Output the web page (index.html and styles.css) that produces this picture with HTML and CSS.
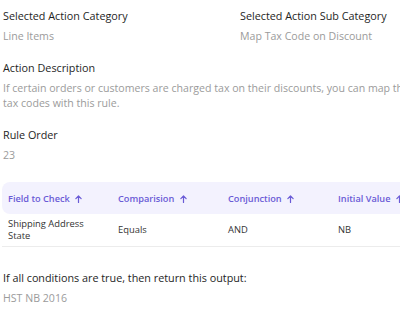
FILE: index.html
```html
<!DOCTYPE html>
<html>

<head>
    <meta charset="UTF-8">
    <title>Rule Details</title>
    <!-- Styles  -->
    <link rel="stylesheet" href="styles.css">
</head>

<body>
    <div class="page">
        <!-- Category info -->
        <div class="row">
            <div class="field">
                <div class="label">Selected Action Category</div>
                <div class="value">Line Items</div>
            </div>
            <div class="field">
                <div class="label">Selected Action Sub Category</div>
                <div class="value">Map Tax Code on Discount</div>
            </div>
        </div>

        <div class="field">
            <div class="label">Action Description</div>
            <div class="value">If certain orders or customers are charged tax on their discounts, you can map the
                tax codes with this rule.</div>
        </div>

        <div class="field">
            <div class="label">Rule Order</div>
            <div class="value">23</div>
        </div>

        <!-- Conditions -->
        <table class="conditions">
            <thead>
                <tr>
                    <th>Field to Check <svg class="arrow" viewBox="0 0 8 9"><path d="M4 8.5V1M1 4l3-3 3 3" /></svg></th>
                    <th>Comparision <svg class="arrow" viewBox="0 0 8 9"><path d="M4 8.5V1M1 4l3-3 3 3" /></svg></th>
                    <th>Conjunction <svg class="arrow" viewBox="0 0 8 9"><path d="M4 8.5V1M1 4l3-3 3 3" /></svg></th>
                    <th>Initial Value <svg class="arrow" viewBox="0 0 8 9"><path d="M4 8.5V1M1 4l3-3 3 3" /></svg></th>
                </tr>
            </thead>
            <tbody>
                <tr>
                    <td>Shipping Address<br>State</td>
                    <td>Equals</td>
                    <td>AND</td>
                    <td>NB</td>
                </tr>
            </tbody>
        </table>

        <div class="field">
            <div class="label">If all conditions are true, then return this output:</div>
            <div class="value">HST NB 2016</div>
        </div>
    </div>
</body>

</html>
```

FILE: styles.css
```css
body {
    margin: 0;
    overflow: hidden;
    font-family: "Open Sans", sans-serif;
}

.page {
    width: 420px;
    padding: 8px 3px;
}

.row {
    display: grid;
    grid-template-columns: 237px 1fr;
}

.field {
    margin-bottom: 16px;
}

.label {
    font-size: 10.8px;
    font-weight: 500;
    color: #1e1e1e;
    line-height: 16px;
    white-space: nowrap;
}

.value {
    font-size: 10.6px;
    color: #9b9b9b;
    line-height: 15px;
    margin-top: 5px;
}

.conditions {
    width: 440px;
    margin: 19px 0 23px -1px;
    border-collapse: collapse;
    table-layout: fixed;
}

.conditions th {
    background-color: #f3f2fe;
    color: #6a5bd6;
    font-size: 9.2px;
    font-weight: 600;
    text-align: left;
    height: 32px;
    padding: 0 6px;
    white-space: nowrap;
}

.conditions th:first-child {
    border-radius: 8px 0 0 8px;
}

.arrow {
    width: 7px;
    height: 8px;
    margin-left: 3px;
    vertical-align: -1px;
    fill: none;
    stroke: #6a5bd6;
    stroke-width: 1.4;
    stroke-linecap: round;
    stroke-linejoin: round;
}

.conditions td {
    color: #333;
    font-size: 9.4px;
    height: 32px;
    padding: 0 6px;
    border-bottom: 1px solid #ececec;
    line-height: 12px;
}
```
